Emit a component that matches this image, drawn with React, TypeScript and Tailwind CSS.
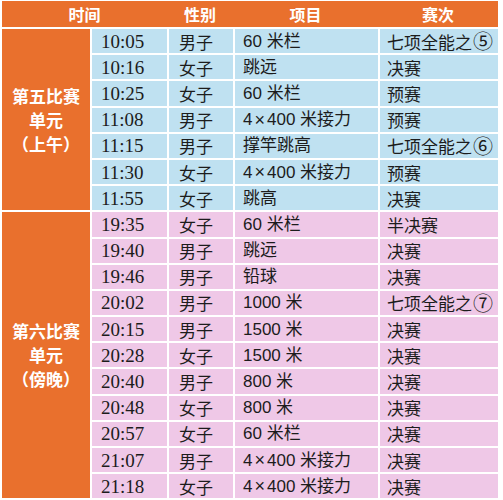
import React from "react";

type Row = [string, string, string, string];

const morning: Row[] = [
  ["10:05", "男子", "60 米栏", "七项全能之⑤"],
  ["10:16", "女子", "跳远", "决赛"],
  ["10:25", "女子", "60 米栏", "预赛"],
  ["11:08", "男子", "4×400 米接力", "预赛"],
  ["11:15", "男子", "撑竿跳高", "七项全能之⑥"],
  ["11:30", "女子", "4×400 米接力", "预赛"],
  ["11:55", "女子", "跳高", "决赛"],
];

const evening: Row[] = [
  ["19:35", "女子", "60 米栏", "半决赛"],
  ["19:40", "男子", "跳远", "决赛"],
  ["19:46", "男子", "铅球", "决赛"],
  ["20:02", "男子", "1000 米", "七项全能之⑦"],
  ["20:15", "男子", "1500 米", "决赛"],
  ["20:28", "女子", "1500 米", "决赛"],
  ["20:40", "男子", "800 米", "决赛"],
  ["20:48", "女子", "800 米", "决赛"],
  ["20:57", "女子", "60 米栏", "决赛"],
  ["21:07", "男子", "4×400 米接力", "决赛"],
  ["21:18", "女子", "4×400 米接力", "决赛"],
];

const cjk = "font-['Noto_Sans_CJK_SC',sans-serif]";

// the × and circled numbers come out too small in the default glyphs
function Event({ text }: { text: string }) {
  const m = text.match(/^(.*)([⑤⑥⑦])$/);
  if (!m) return <>{text}</>;
  return (
    <>
      {m[1]}
      <span className="text-[20px] ml-[1px]">{m[2]}</span>
    </>
  );
}

function Project({ text }: { text: string }) {
  const parts = text.split("×");
  if (parts.length < 2) return <>{text}</>;
  return (
    <>
      {parts[0]}
      <span className="mx-[2px] text-[18px]">×</span>
      {parts[1]}
    </>
  );
}

function Rows({ rows, bg }: { rows: Row[]; bg: string }) {
  return (
    <>
      {rows.map((r) => (
        <React.Fragment key={r[0]}>
          <div className={`${bg} h-[24.2px] flex items-center pl-[9px] text-[19px] leading-none text-[#1c1c1c] font-['Liberation_Serif',serif]`}>
            {r[0]}
          </div>
          <div className={`${bg} h-[24.2px] flex items-center pl-[10px] text-[17px] leading-none text-[#1c1c1c] ${cjk}`}>
            {r[1]}
          </div>
          <div className={`${bg} h-[24.2px] flex items-center pl-[8px] text-[17px] leading-none text-[#1c1c1c] font-['Liberation_Sans','Noto_Sans_CJK_SC',sans-serif]`}>
            <Project text={r[2]} />
          </div>
          <div className={`${bg} h-[24.2px] flex items-center pl-[7px] text-[17px] leading-none text-[#1c1c1c] ${cjk}`}>
            <Event text={r[3]} />
          </div>
        </React.Fragment>
      ))}
    </>
  );
}

function Session({ lines, span }: { lines: string[]; span: string }) {
  return (
    <div className={`${span} bg-[#e9702d] flex flex-col items-center justify-center text-white font-bold text-[17px] leading-[24px] ${cjk}`}>
      {lines.map((l) => (
        <span key={l}>{l}</span>
      ))}
    </div>
  );
}

export default function App() {
  return (
    <div className="w-[503px] h-[500px] bg-white pt-[1px] pl-[2px]">
      <div className="w-[496px] grid grid-cols-[88px_75px_64px_143px_118px] gap-[2px] bg-white">
        <div className={`col-span-5 h-[26px] bg-[#e9702d] grid grid-cols-[165px_66px_145px_120px] text-white font-bold text-[16px] ${cjk}`}>
          <div className="flex items-center justify-center">时间</div>
          <div className="flex items-center justify-center">性别</div>
          <div className="flex items-center justify-center">项目</div>
          <div className="flex items-center justify-center">赛次</div>
        </div>

        <Session lines={["第五比赛", "单元", "（上午）"]} span="row-span-7" />
        <Rows rows={morning} bg="bg-[#bfe1f1]" />

        <Session lines={["第六比赛", "单元", "（傍晚）"]} span="row-span-11" />
        <Rows rows={evening} bg="bg-[#efc8e7]" />
      </div>
    </div>
  );
}
